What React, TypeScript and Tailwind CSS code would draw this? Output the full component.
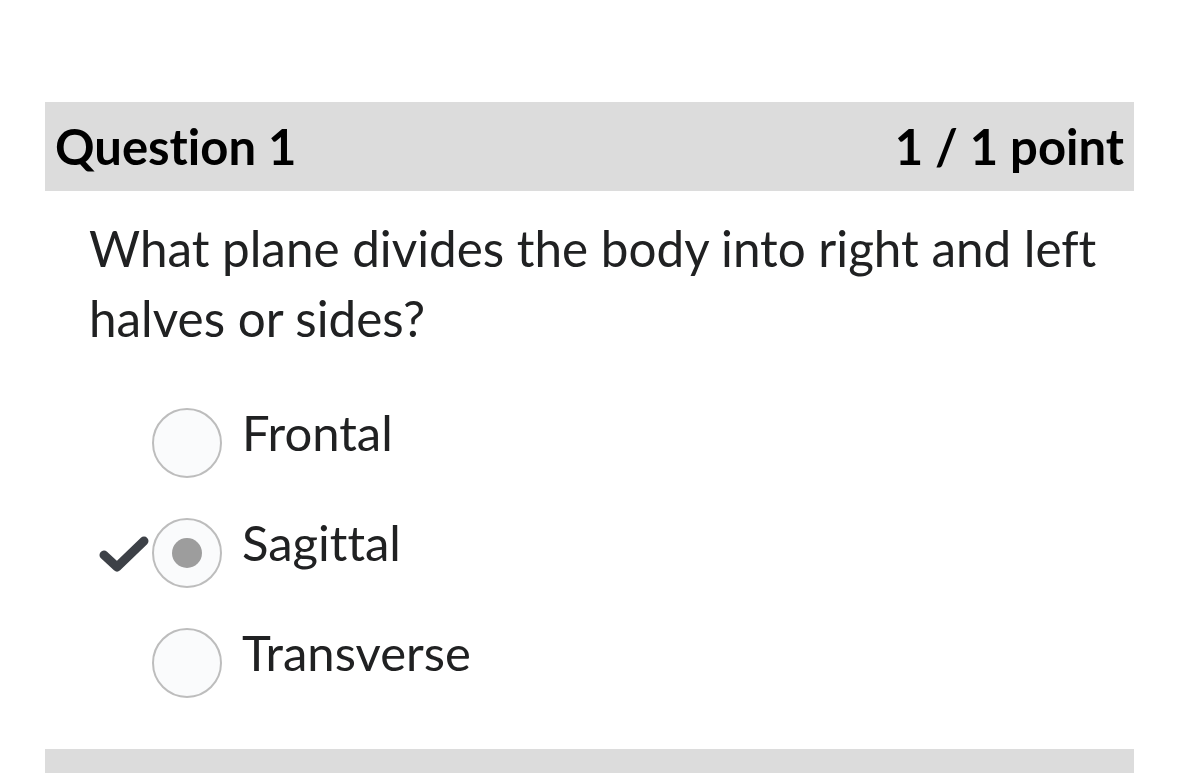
const options = [
  { label: 'Frontal', selected: false },
  { label: 'Sagittal', selected: true },
  { label: 'Transverse', selected: false },
]

function CheckMark() {
  return (
    <svg width="52" height="40" viewBox="0 0 52 40" className="shrink-0">
      <path
        d="M6 22 L19 34 L46 8"
        fill="none"
        stroke="#3d4147"
        strokeWidth="9"
        strokeLinecap="round"
        strokeLinejoin="round"
      />
    </svg>
  )
}

export default function App() {
  return (
    <div className="min-h-[773px] bg-white font-['Lato','Noto_Sans',sans-serif] [font-variant-ligatures:none] overflow-hidden">
      <div className="mx-[45px] pt-[102px]">
        <div className="h-[89px] bg-[#dcdcdc] flex items-center justify-between px-[10px] text-black font-bold text-[49px]">
          <span>Question 1</span>
          <span>1 / 1 point</span>
        </div>
        <div className="pl-[44px] pr-[20px] pt-[22px] text-[#202122] text-[49.4px] leading-[70px]">
          What plane divides the body into right and left halves or sides?
        </div>
        <div className="mt-[55px] flex flex-col gap-[40px]">
          {options.map((o) => (
            <div key={o.label} className="flex items-center h-[70px]">
              <div className="w-[107px] flex justify-end pr-[2px]">
                {o.selected && <CheckMark />}
              </div>
              <div className="w-[70px] h-[70px] rounded-full border-[2px] border-[#bdbdbd] bg-[#fafbfc] flex items-center justify-center shrink-0">
                {o.selected && <div className="w-[30px] h-[30px] rounded-full bg-[#9d9d9d]" />}
              </div>
              <span className="ml-[20px] text-[49px] text-[#202122] leading-none -mt-[22px]">{o.label}</span>
            </div>
          ))}
        </div>
        <div className="mt-[51px] h-[40px] bg-[#dcdcdc]" />
      </div>
    </div>
  )
}
